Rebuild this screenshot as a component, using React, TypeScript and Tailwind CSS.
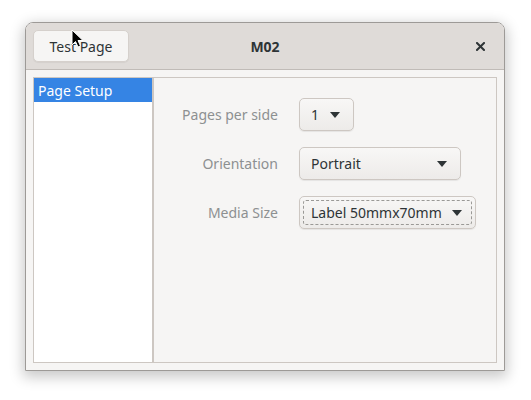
// Print dialog: "M02" page setup tab (GTK look)

const font = { fontFamily: '"Noto Sans", "Open Sans", sans-serif' }

function Caret() {
  return (
    <svg width="10" height="6" viewBox="0 0 10 6" className="shrink-0">
      <path d="M0 0 L10 0 L5 6 Z" fill="#2e3436" />
    </svg>
  )
}

function Combo({ label, width, focused }: { label: string; width: string; focused?: boolean }) {
  return (
    <div
      className={`${width} relative h-[33px] flex items-center justify-between pl-[11px] pr-[13px] rounded-[5px] border border-[#cdc7c2] bg-gradient-to-b from-[#f8f7f6] to-[#edebe9] shadow-[0_1px_1px_rgba(0,0,0,0.07)] text-[#2e3436] text-[14px]`}
    >
      {focused && (
        <div className="absolute inset-[3px] rounded-[3px] border border-dashed border-[#9a9996]" />
      )}
      <span>{label}</span>
      <Caret />
    </div>
  )
}

export default function App() {
  return (
    <div className="relative w-[531px] h-[400px] bg-white pl-[25px] pt-[22px]" style={font}>
      <div className="w-[480px] h-[349px] flex flex-col border border-[#9d9a97] rounded-t-[8px] overflow-hidden shadow-[0_4px_14px_2px_rgba(0,0,0,0.22)]">
        {/* header bar */}
        <div className="relative h-[47px] shrink-0 flex items-center px-[7px] bg-[#dfdbd8] border-b border-[#c0bbb7]">
          <button className="h-[32px] w-[96px] rounded-[5px] border border-[#d5d0cc] bg-[#f6f5f4] text-[14px] text-[#2e3436] shadow-[0_1px_1px_rgba(0,0,0,0.05)]">
            Test Page
          </button>
          <div className="absolute left-0 right-0 text-center font-bold text-[14px] text-[#2e3436] pointer-events-none">
            M02
          </div>
          <div className="ml-auto mr-[12px] flex items-center">
            <svg width="9" height="9" viewBox="0 0 9 9">
              <path d="M1 1 L8 8 M8 1 L1 8" stroke="#2e3436" strokeWidth="2" strokeLinecap="square" />
            </svg>
          </div>
        </div>

        {/* body */}
        <div className="flex-1 bg-[#f6f5f4] p-[7px]">
          <div className="h-full flex border border-[#cdc7c2]">
            <div className="w-[120px] shrink-0 bg-white border-r-2 border-[#cdc7c2]">
              <div className="h-[24px] flex items-center pl-[4px] bg-[#3584e4] text-white text-[14px]">
                Page Setup
              </div>
            </div>
            <div className="flex-1 pt-[20px]">
              <div className="grid grid-cols-[124px_auto] gap-x-[21px] gap-y-[16px] items-center text-[14px]">
                <div className="text-right text-[#8d9091]">Pages per side</div>
                <Combo label="1" width="w-[55px]" />
                <div className="text-right text-[#8d9091]">Orientation</div>
                <Combo label="Portrait" width="w-[162px]" />
                <div className="text-right text-[#8d9091]">Media Size</div>
                <Combo label="Label 50mmx70mm" width="w-[177px]" focused />
              </div>
            </div>
          </div>
        </div>
      </div>

      {/* mouse pointer */}
      <svg className="absolute left-[71px] top-[29px]" width="14" height="20" viewBox="0 0 14 20">
        <path d="M1 1 L1 16 L4.5 12.5 L7 18 L9.5 17 L7 11.5 L12 11.5 Z" fill="#000" stroke="#fff" strokeWidth="1" />
      </svg>
    </div>
  )
}
